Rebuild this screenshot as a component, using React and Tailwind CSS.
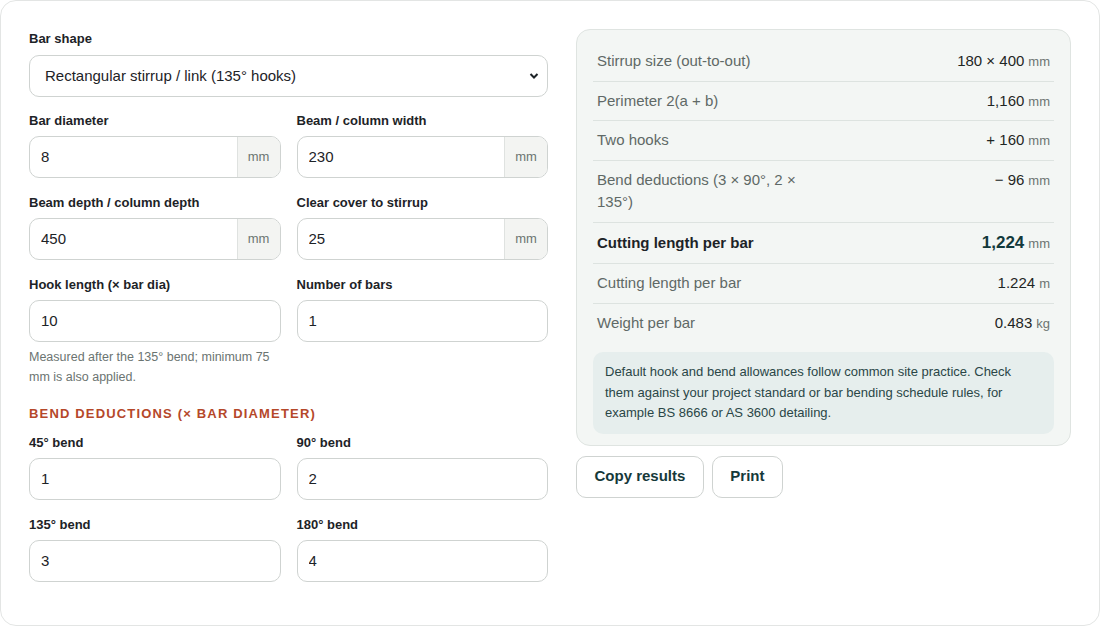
import React from "react";

const font = { fontFamily: '"Liberation Sans", Arial, sans-serif' };

function Label({ children, mb = "mb-2" }) {
  return (
    <div className={`text-[13px] font-bold leading-4 text-[#1d2327] ${mb}`}>{children}</div>
  );
}

function Field({ label, value, unit }) {
  return (
    <div>
      <Label mb="mb-[7px]">{label}</Label>
      <div className="flex h-[42px] rounded-[10px] border border-[#cfd3d1] bg-white overflow-hidden">
        <input
          readOnly
          value={value}
          className="flex-1 min-w-0 px-[11px] text-[15px] text-[#1d2327] outline-none bg-transparent"
          style={font}
        />
        {unit && (
          <div className="w-[43px] flex items-center justify-center border-l border-[#dfe2e0] bg-[#f3f4f2] text-[13px] text-[#6b7471]">
            {unit}
          </div>
        )}
      </div>
    </div>
  );
}

function Row({ label, value, unit, bold, last }) {
  return (
    <div
      className={`flex justify-between items-start px-1 ${bold ? "py-[9px]" : "py-2"} ${
        last ? "" : "border-b border-[#dde3e0]"
      }`}
    >
      <div
        className={`max-w-[220px] text-[15px] leading-[22.5px] ${
          bold ? "font-bold text-[#1d2327]" : "text-[#5f6966]"
        }`}
      >
        {label}
      </div>
      <div className="text-right whitespace-nowrap leading-[22.5px] h-[22.5px]">
        <span className={bold ? "text-[17px] leading-[22.5px] font-bold text-[#12393b]" : "text-[15px] leading-[22.5px] text-[#1f2624]"}>
          {value}
        </span>
        <span className="text-[13px] leading-none text-[#6b7471] ml-1">{unit}</span>
      </div>
    </div>
  );
}

export default function App() {
  return (
    <div className="w-[1100px] h-[626px] bg-white" style={font}>
      <div className="h-[626px] rounded-[16px] border border-[#e3e5e4] bg-white px-[28px] pt-[28px] flex gap-[28px]">
        {/* Left column */}
        <div className="w-[519px] pt-[2px]">
          <div className="mb-4">
            <Label>Bar shape</Label>
            <div className="relative h-[42px] rounded-[10px] border border-[#cfd3d1] bg-white flex items-center pl-[15px]">
              <span className="text-[15px] text-[#1d2327]">Rectangular stirrup / link (135° hooks)</span>
              <svg className="absolute right-[8px] top-[16px]" width="10" height="8" viewBox="0 0 10 8">
                <path d="M1.5 2 L5 5.5 L8.5 2" fill="none" stroke="#1d2327" strokeWidth="2" />
              </svg>
            </div>
          </div>

          <div className="grid grid-cols-2 gap-x-4 gap-y-[17px]">
            <Field label="Bar diameter" value="8" unit="mm" />
            <Field label="Beam / column width" value="230" unit="mm" />
            <Field label="Beam depth / column depth" value="450" unit="mm" />
            <Field label="Clear cover to stirrup" value="25" unit="mm" />
            <div>
              <Field label="Hook length (× bar dia)" value="10" />
              <div className="mt-[5px] text-[12.5px] leading-5 text-[#6b7471]">
                Measured after the 135° bend; minimum 75 mm is also applied.
              </div>
            </div>
            <Field label="Number of bars" value="1" />
          </div>

          <div className="mt-[19px] mb-[13px] text-[13px] font-bold leading-4 tracking-[0.09em] text-[#b5482a]">
            BEND DEDUCTIONS (× BAR DIAMETER)
          </div>

          <div className="grid grid-cols-2 gap-x-4 gap-y-[17px]">
            <Field label="45° bend" value="1" />
            <Field label="90° bend" value="2" />
            <Field label="135° bend" value="3" />
            <Field label="180° bend" value="4" />
          </div>
        </div>

        {/* Right column */}
        <div className="w-[495px]">
          <div className="rounded-[14px] border border-[#dfe4e1] bg-[#f3f6f4] px-4 pt-3 pb-[11px]">
            <Row label="Stirrup size (out-to-out)" value="180 × 400" unit="mm" />
            <Row label="Perimeter 2(a + b)" value="1,160" unit="mm" />
            <Row label="Two hooks" value="+ 160" unit="mm" />
            <Row label="Bend deductions (3 × 90°, 2 × 135°)" value="− 96" unit="mm" />
            <Row label="Cutting length per bar" value="1,224" unit="mm" bold />
            <Row label="Cutting length per bar" value="1.224" unit="m" />
            <Row label="Weight per bar" value="0.483" unit="kg" last />
            <div className="mt-[10px] rounded-[10px] bg-[#e6eeed] px-3 py-[10px] text-[13px] leading-[20.5px] text-[#2a4647]">
              Default hook and bend allowances follow common site practice. Check them against your project
              standard or bar bending schedule rules, for example BS 8666 or AS 3600 detailing.
            </div>
          </div>

          <div className="mt-[10px] flex gap-2">
            <button className="h-[42px] px-[17.5px] rounded-[10px] border border-[#cfd3d1] bg-white text-[15px] font-bold text-[#16393a]" style={font}>
              Copy results
            </button>
            <button className="h-[42px] px-[17.5px] rounded-[10px] border border-[#cfd3d1] bg-white text-[15px] font-bold text-[#16393a]" style={font}>
              Print
            </button>
          </div>
        </div>
      </div>
    </div>
  );
}
